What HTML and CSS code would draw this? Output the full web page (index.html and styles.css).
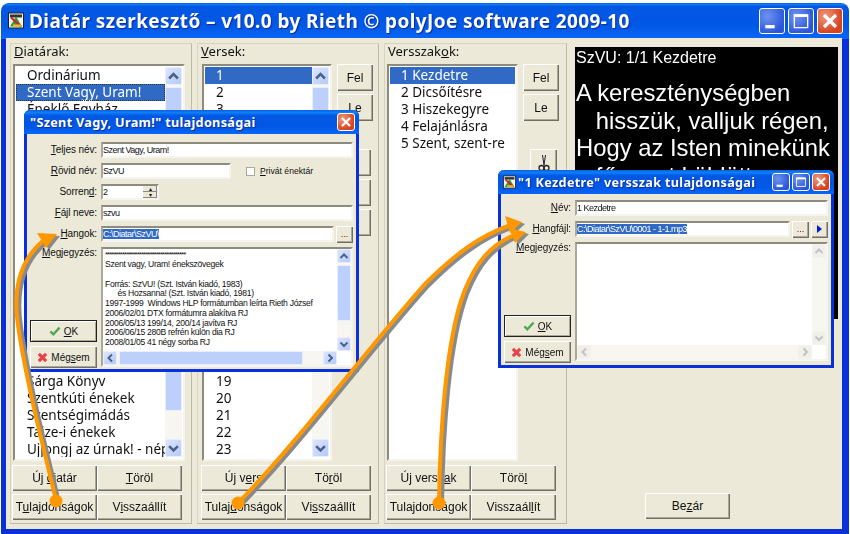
FILE: index.html
```html
<!DOCTYPE html>
<html lang="en">
<head>
    <meta charset="UTF-8">
    <title>Diatár szerkesztő</title>
    <link rel="stylesheet" href="styles.css">
</head>
<body>
<svg class="defs" width="0" height="0">
    <defs>
        <symbol id="up" viewBox="0 0 12 12"><path d="M2.5 8 6 4.5 9.500 8" fill="none" stroke="#4d6185" stroke-width="2"/></symbol>
        <symbol id="down" viewBox="0 0 12 12"><path d="M2.500 4.500 6 8 9.500 4.500" fill="none" stroke="#4d6185" stroke-width="2"/></symbol>
        <symbol id="left" viewBox="0 0 12 12"><path d="M8 2.500 4.500 6 8 9.500" fill="none" stroke="#4d6185" stroke-width="2"/></symbol>
        <symbol id="right" viewBox="0 0 12 12"><path d="M4.500 2.500 8 6 4.500 9.500" fill="none" stroke="#4d6185" stroke-width="2"/></symbol>
        <symbol id="appicon" viewBox="0 0 16 16">
            <rect x="0.500" y="0.500" width="15" height="15" fill="#f4f4ec" stroke="#222"/>
            <rect x="2" y="2" width="12" height="3" fill="#333"/>
            <path d="M2 14 8 4l6 10z" fill="#2f9b3a"/>
            <path d="M3 5l10 9" stroke="#d8202a" stroke-width="2"/>
            <path d="M5 13h8" stroke="#e8c020" stroke-width="2"/>
        </symbol>
        <symbol id="close" viewBox="0 0 18 18"><path d="M4.500 4.500l9 9M13.500 4.500l-9 9" stroke="#fff" stroke-width="2.400"/></symbol>
        <symbol id="min" viewBox="0 0 18 18"><rect x="4" y="12" width="7" height="2.500" fill="#fff"/></symbol>
        <symbol id="max" viewBox="0 0 18 18"><path d="M4 4.500h10v9.500H4z" fill="none" stroke="#fff"/><rect x="4" y="4" width="10" height="2" fill="#fff"/></symbol>
        <symbol id="check" viewBox="0 0 14 12"><path d="M1.500 6.500 5 10l7.500-8" fill="none" stroke="#4fa84f" stroke-width="2.800"/></symbol>
        <symbol id="cross" viewBox="0 0 12 12"><path d="M2 2l8 8M10 2l-8 8" stroke="#e8434a" stroke-width="3.400"/></symbol>
    </defs>
</svg>

<div class="screen">
    <div class="window">
        <div class="titlebar">
            <svg class="appicon"><use href="#appicon"/></svg>
            <span class="title-text">Diatár szerkesztő – v10.0 by Rieth © polyJoe software 2009-10</span>
            <div class="wbtns">
                <span class="wbtn"><svg><use href="#min"/></svg></span>
                <span class="wbtn"><svg><use href="#max"/></svg></span>
                <span class="wbtn wbtn-close"><svg><use href="#close"/></svg></span>
            </div>
        </div>
        <div class="client">
            <!-- diatarak -->
            <div class="panel panel-a">
                <div class="panel-label"><u>D</u>iatárak:</div>
                <div class="panel-mid">
                    <div class="list list-a">
                        <div class="rows">
                            <div class="row">Ordinárium</div>
                            <div class="row row-sel row-focus">Szent Vagy, Uram!</div>
                            <div class="row">Éneklő Egyház</div>
                            <div class="rows-gap"></div>
                            <div class="row">Sárga Könyv</div>
                            <div class="row">Szentkúti énekek</div>
                            <div class="row">Szentségimádás</div>
                            <div class="row">Taize-i énekek</div>
                            <div class="row">Ujjongj az úrnak! - népénekek</div>
                            <div class="row">Zengjük az Urat</div>
                        </div>
                        <div class="sb">
                            <span class="sb-btn"><svg><use href="#up"/></svg></span>
                            <span class="sb-thumb thumb-long"></span>
                            <span class="sb-btn sb-end"><svg><use href="#down"/></svg></span>
                        </div>
                    </div>
                </div>
                <div class="btn-grid">
                    <button class="btn">Új <u>d</u>iatár</button>
                    <button class="btn"><u>T</u>öröl</button>
                    <button class="btn">T<u>u</u>lajdonságok</button>
                    <button class="btn">V<u>i</u>sszaállít</button>
                </div>
            </div>

            <!-- versek -->
            <div class="panel panel-b">
                <div class="panel-label"><u>V</u>ersek:</div>
                <div class="panel-mid">
                    <div class="list list-b">
                        <div class="rows">
                            <div class="row row-sel">1</div>
                            <div class="row">2</div>
                            <div class="row">3</div>
                            <div class="rows-gap"></div>
                            <div class="row">19</div>
                            <div class="row">20</div>
                            <div class="row">21</div>
                            <div class="row">22</div>
                            <div class="row">23</div>
                        </div>
                        <div class="sb">
                            <span class="sb-btn"><svg><use href="#up"/></svg></span>
                            <span class="sb-thumb thumb-short"></span>
                            <span class="sb-btn sb-end"><svg><use href="#down"/></svg></span>
                        </div>
                    </div>
                    <div class="side">
                        <button class="btn btn-side">Fel</button>
                        <button class="btn btn-side">Le</button>
                        <button class="btn btn-icon btn-first"></button>
                        <button class="btn btn-icon"></button>
                        <button class="btn btn-icon"></button>
                    </div>
                </div>
                <div class="btn-grid">
                    <button class="btn">Új v<u>e</u>rs</button>
                    <button class="btn">Tö<u>r</u>öl</button>
                    <button class="btn">Tulaj<u>d</u>onságok</button>
                    <button class="btn">Vi<u>s</u>szaállít</button>
                </div>
            </div>

            <!-- versszakok -->
            <div class="panel panel-c">
                <div class="panel-label">Versszak<u>o</u>k:</div>
                <div class="panel-mid">
                    <div class="list list-c">
                        <div class="rows">
                            <div class="row row-sel">1 Kezdetre</div>
                            <div class="row">2 Dicsőítésre</div>
                            <div class="row">3 Hiszekegyre</div>
                            <div class="row">4 Felajánlásra</div>
                            <div class="row">5 Szent, szent-re</div>
                        </div>
                    </div>
                    <div class="side">
                        <button class="btn btn-side">Fel</button>
                        <button class="btn btn-side">Le</button>
                        <button class="btn btn-icon btn-first">
                            <svg class="scissors" viewBox="0 0 12 20"><path d="M4.500 1l1.500 10M7.500 1 6 11" stroke="#222" fill="none"/><circle cx="3.500" cy="14" r="2.500" fill="none" stroke="#222" stroke-width="1.300"/><circle cx="8.500" cy="14" r="2.500" fill="none" stroke="#222" stroke-width="1.300"/></svg>
                        </button>
                        <button class="btn btn-icon"></button>
                        <button class="btn btn-icon"></button>
                    </div>
                </div>
                <div class="btn-grid">
                    <button class="btn">Új versz<u>a</u>k</button>
                    <button class="btn">Törö<u>l</u></button>
                    <button class="btn">Tulajdonsá<u>g</u>ok</button>
                    <button class="btn">Visszaál<u>l</u>ít</button>
                </div>
            </div>

            <!-- elonezet -->
            <div class="right">
                <div class="preview">
                    <div class="preview-head">SzVU: 1/1 Kezdetre</div>
                    <div class="preview-text">A kereszténységben
   hisszük, valljuk régen,
Hogy az Isten minekünk
   főpapot küldött</div>
                </div>
                <button class="btn btn-close">Be<u>z</u>ár</button>
            </div>
        </div>
    </div>

    <!-- Szent Vagy tulajdonsagai -->
    <div class="dialog dialog-song">
        <div class="dlg-title">
            <span class="dlg-text">"Szent Vagy, Uram!" tulajdonságai</span>
            <span class="wbtn wbtn-close"><svg><use href="#close"/></svg></span>
        </div>
        <div class="form">
            <label class="lbl"><u>T</u>eljes név:</label>
            <div class="field">Szent Vagy, Uram!</div>

            <label class="lbl"><u>R</u>övid név:</label>
            <div class="field-line">
                <div class="field field-short">SzVU</div>
                <span class="checkbox"></span>
                <span class="check-label"><u>P</u>rivát énektár</span>
            </div>

            <label class="lbl">Sorren<u>d</u>:</label>
            <div class="field field-spin">
                <span>2</span>
                <span class="spin"><i>▴</i><i>▾</i></span>
            </div>

            <label class="lbl"><u>F</u>ájl neve:</label>
            <div class="field">szvu</div>

            <label class="lbl"><u>H</u>angok:</label>
            <div class="field-line field-line-tight">
                <div class="field field-grow"><span class="hilite">C:\Diatar\SzVU\</span></div>
                <button class="btn btn-dots">...</button>
            </div>

            <div class="left-cell">
                <label class="lbl lbl-top"><u>M</u>egjegyzés:</label>
                <button class="btn btn-dlg btn-default"><svg class="ico-check"><use href="#check"/></svg><span><u>O</u>K</span></button>
                <button class="btn btn-dlg"><svg class="ico-cross"><use href="#cross"/></svg><span>Még<u>s</u>em</span></button>
            </div>
            <div class="memo memo-song">
                <div class="memo-text"><div class="memo-stars">**************************************</div><pre class="memo-pre">Szent vagy, Uram! énekszövegek

Forrás: SzVU! (Szt. István kiadó, 1983)
      és Hozsanna! (Szt. István kiadó, 1981)
1997-1999  Windows HLP formátumban leírta Rieth József
2006/02/01 DTX formátumra alakítva RJ
2006/05/13 199/14, 200/14 javítva RJ
2006/06/15 280B refrén külön dia RJ
2008/01/05 41 négy sorba RJ</pre></div>
                <div class="sb sb-small">
                    <span class="sb-btn"><svg><use href="#up"/></svg></span>
                    <span class="sb-thumb thumb-memo"></span>
                    <span class="sb-btn sb-end"><svg><use href="#down"/></svg></span>
                </div>
                <div class="sbh">
                    <span class="sb-btn"><svg><use href="#left"/></svg></span>
                    <span class="sbh-thumb"></span>
                    <span class="sb-btn sb-end-h"><svg><use href="#right"/></svg></span>
                </div>
            </div>
        </div>
    </div>

    <!-- versszak tulajdonsagai -->
    <div class="dialog dialog-verse">
        <div class="dlg-title">
            <svg class="appicon-small"><use href="#appicon"/></svg>
            <span class="dlg-text">"1 Kezdetre" versszak tulajdonságai</span>
            <span class="wbtn wbtn-blue"><svg><use href="#min"/></svg></span>
            <span class="wbtn wbtn-blue"><svg><use href="#max"/></svg></span>
            <span class="wbtn wbtn-close"><svg><use href="#close"/></svg></span>
        </div>
        <div class="form form-verse">
            <label class="lbl"><u>N</u>év:</label>
            <div class="field">1 Kezdetre</div>

            <label class="lbl"><u>H</u>angfájl:</label>
            <div class="field-line field-line-tight">
                <div class="field field-grow"><span class="hilite">C:\Diatar\SzVU\0001 - 1-1.mp3</span></div>
                <button class="btn btn-dots">...</button>
                <button class="btn btn-dots"><span class="play"></span></button>
            </div>

            <div class="left-cell">
                <label class="lbl lbl-top"><u>M</u>egjegyzés:</label>
                <button class="btn btn-dlg btn-default"><svg class="ico-check"><use href="#check"/></svg><span><u>O</u>K</span></button>
                <button class="btn btn-dlg"><svg class="ico-cross"><use href="#cross"/></svg><span>Még<u>s</u>em</span></button>
            </div>
            <div class="memo memo-verse">
                <div class="memo-text"></div>
                <div class="sb sb-small sb-off">
                    <span class="sb-btn"><svg><use href="#up"/></svg></span>
                    <span class="sb-btn sb-end"><svg><use href="#down"/></svg></span>
                </div>
                <div class="sbh sbh-off">
                    <span class="sb-btn"><svg><use href="#left"/></svg></span>
                    <span class="sb-btn sb-end-h"><svg><use href="#right"/></svg></span>
                </div>
            </div>
        </div>
    </div>

    <!-- nyilak -->
    <svg class="arrows" viewBox="0 0 850 534">
        <defs>
            <g id="arrow-lines" fill="none" stroke-width="4" stroke-linecap="round">
                <path d="M56 501C46 455 27 390 18 325C12 285 22 258 44 240"/>
                <path d="M238 503C300 440 370 345 425 284C455 254 480 236 508 226"/>
                <path d="M439 503C440 430 446 340 464 292C476 262 490 246 512 236"/>
            </g>
            <g id="arrow-heads">
                <path d="M37 233 57 234 46 248z"/>
                <path d="M505 216 522 222 510 233z"/>
                <path d="M509 228 526 232 515 243z"/>
            </g>
        </defs>
        <g class="arrow-shadow" transform="translate(3 2)">
            <use href="#arrow-lines"/>
            <use href="#arrow-heads"/>
        </g>
        <g class="arrow-main">
            <use href="#arrow-lines"/>
            <use href="#arrow-heads"/>
            <circle cx="56" cy="501" r="6.500"/>
            <circle cx="238" cy="503" r="6.500"/>
            <circle cx="439" cy="503" r="6.500"/>
        </g>
    </svg>
</div>
</body>
</html>
```

FILE: styles.css
```css
* {
    box-sizing: border-box;
}
html, body {
    margin: 0;
    padding: 0;
    background: #fff;
}
.defs {
    position: absolute;
}
.screen {
    position: relative;
    width: 850px;
    height: 534px;
    overflow: hidden;
    filter: blur(0.4px);
    font-family: "Noto Sans", sans-serif;
    color: #111;
}
u {
    text-underline-offset: 1px;
}

/* main window */
.window {
    width: 848px;
    height: 531px;
    margin: 3px 0 0 1px;
    border-radius: 8px 8px 0 0;
    background: linear-gradient(#0a5be0, #0d7bf8 4%, #0358e2 9%, #0157e6 60%, #0a66f6 100%);
    background-size: 100% 36px;
    background-repeat: no-repeat;
    background-color: #0831d9;
}
.titlebar {
    display: flex;
    align-items: center;
    height: 35px;
    padding: 0 6px 0 7px;
}
.appicon {
    width: 16px;
    height: 17px;
    margin-right: 5px;
}
.title-text {
    font-size: 19px;
    font-weight: 700;
    letter-spacing: 0.4px;
    color: #fff;
    white-space: nowrap;
    text-shadow: 1px 1px 1px #0b2c9c;
}
.wbtns {
    display: flex;
    gap: 3px;
    margin-left: auto;
}
.wbtn {
    display: block;
    flex: none;
    width: 18px;
    height: 18px;
    border: 1px solid #fff;
    border-radius: 3px;
    background: radial-gradient(circle at 30% 30%, #6f93f0, #2a56d8 75%);
}
.wbtn svg {
    display: block;
    width: 100%;
    height: 100%;
}
.wbtns .wbtn {
    width: 26px;
    height: 26px;
}
.wbtn-close {
    background: radial-gradient(circle at 30% 30%, #ee9a7c, #d8431f 70%);
}
.client {
    display: flex;
    gap: 5px;
    width: 836px;
    height: 491px;
    margin-left: 5px;
    padding: 5px 0 0 4px;
    background: #ece9d8;
}

/* three list panels */
.panel {
    display: flex;
    flex-direction: column;
    flex: none;
    width: 182px;
    height: 481px;
    border: 1px solid #d6d3c3;
    border-right-color: #bdbaa8;
    border-bottom-color: #bdbaa8;
}
.panel-c {
    width: 183px;
}
.panel-label {
    height: 20px;
    padding-left: 3px;
    font-size: 13px;
    line-height: 15px;
}
.panel-mid {
    display: flex;
    height: 397px;
}
.panel-a .panel-mid {
    padding-left: 2px;
}
.panel-b .panel-mid {
    padding-left: 4px;
}
.panel-c .panel-mid {
    padding-left: 2px;
}
.list {
    display: flex;
    flex: none;
    height: 397px;
    padding: 1px 1px 2px 1px;
    border-top: 2px solid #8d8b7e;
    border-left: 2px solid #8d8b7e;
    border-right: 2px solid #f5f4ee;
    border-bottom: 2px solid #f5f4ee;
    background: #fff;
    overflow: hidden;
}
.list-a {
    width: 172px;
}
.list-b {
    width: 130px;
}
.list-c {
    width: 131px;
}
.rows {
    flex: 1;
    min-width: 0;
    overflow: hidden;
}
.row {
    height: 17px;
    padding-left: 11px;
    font-size: 13.5px;
    line-height: 17px;
    white-space: nowrap;
    overflow: hidden;
}
.rows-gap {
    height: 255px;
}
.row-sel {
    background: #316ac5;
    color: #fff;
}
.row-focus {
    outline: 1px dotted #333;
    outline-offset: -1px;
}

/* scrollbars */
.sb {
    display: flex;
    flex-direction: column;
    flex: none;
    width: 17px;
    background: #f7f6f1;
}
.sb-btn {
    display: block;
    flex: none;
    width: 17px;
    height: 18px;
    border: 1px solid #e8eefc;
    border-radius: 2px;
    background: linear-gradient(135deg, #dbe6fd, #b4caf9);
}
.sb-btn svg {
    display: block;
    width: 100%;
    height: 100%;
}
.sb-thumb {
    display: block;
    margin-top: 2px;
    border: 1px solid #e8eefc;
    border-radius: 2px;
    background: #bcd0fb;
}
.thumb-long {
    height: 324px;
}
.thumb-short {
    height: 24px;
}
.thumb-memo {
    height: 56px;
}
.sb-end {
    margin-top: auto;
}
.sb-small,
.sb-small .sb-btn {
    width: 14px;
}
.sb-small .sb-btn {
    height: 14px;
}
.sbh {
    display: flex;
    grid-column: 1 / 3;
    height: 14px;
    margin-right: 14px;
    background: #f7f6f1;
}
.sbh .sb-btn {
    width: 14px;
    height: 14px;
}
.sbh-thumb {
    display: block;
    width: 184px;
    height: 14px;
    margin-left: 2px;
    border: 1px solid #e8eefc;
    border-radius: 2px;
    background: #bcd0fb;
}
.sb-end-h {
    margin-left: auto;
}
.sb-off .sb-btn,
.sbh-off .sb-btn {
    border-color: #f4f3ee;
    background: #f0efe8;
}
.sb-off svg,
.sbh-off svg {
    opacity: 0.3;
}

/* buttons */
.btn {
    display: block;
    margin: 0;
    padding: 0;
    border: none;
    border-radius: 0;
    background: #ece9d8;
    box-shadow: inset 1px 1px 0 #fff, inset -1px -1px 0 #716f64, inset -2px -2px 0 #aca899;
    font-family: "Liberation Sans", sans-serif;
    font-size: 12px;
    color: #111;
    white-space: nowrap;
}
.btn-grid {
    display: grid;
    grid-template-columns: 85px 85px;
    grid-template-rows: 26px 26px;
    row-gap: 3px;
    margin-top: 4px;
    margin-left: 1px;
}
.panel-b .btn-grid {
    margin-left: 3px;
}
.side {
    display: flex;
    flex-direction: column;
    width: 36px;
    margin-left: 5px;
}
.btn-side {
    flex: none;
    width: 36px;
    height: 27px;
    margin-bottom: 3px;
}
.btn-icon {
    flex: none;
    width: 27px;
    height: 27px;
    margin: 0 0 3px 7px;
}
.btn-first {
    margin-top: 25px;
}
.scissors {
    display: block;
    width: 12px;
    height: 20px;
    margin: 3px auto 0;
}

/* right side */
.right {
    display: flex;
    flex-direction: column;
    flex: 1;
    height: 481px;
    padding: 4px 4px 5px 3px;
}
.preview {
    height: 272px;
    background: #000;
    color: #fff;
    font-family: "Liberation Sans", sans-serif;
    overflow: hidden;
}
.preview-head {
    height: 32px;
    padding-left: 1px;
    font-size: 16px;
    line-height: 21px;
}
.preview-text {
    padding-left: 1px;
    font-size: 23.800px;
    line-height: 27.5px;
    white-space: pre;
}
.btn-close {
    flex: none;
    width: 85px;
    height: 26px;
    margin-top: auto;
    margin-left: 70px;
}

/* dialogs */
.dialog {
    position: absolute;
    width: 335px;
    border: 3px solid #0831d9;
    border-top: none;
    border-radius: 6px 6px 0 0;
    background: #ece9d8;
}
.dialog-song {
    left: 24px;
    top: 110px;
    height: 262px;
}
.dialog-verse {
    left: 498px;
    top: 170px;
    width: 336px;
    height: 198px;
}
.dlg-title {
    display: flex;
    align-items: center;
    gap: 2px;
    height: 24px;
    margin: 0 -3px;
    padding: 0 4px 0 6px;
    border-radius: 6px 6px 0 0;
    background: linear-gradient(#0a5be0, #0f80fa 10%, #0358e2 24%, #0157e6 70%, #0a66f6 100%);
}
.dlg-text {
    flex: 1;
    font-size: 12.700px;
    font-weight: 700;
    letter-spacing: 0.3px;
    color: #fff;
    white-space: nowrap;
    text-shadow: 1px 1px 1px #0b2c9c;
}
.appicon-small {
    flex: none;
    width: 13px;
    height: 14px;
    margin: 0 0 0 -1px;
}
.form {
    display: grid;
    grid-template-columns: 70px 1fr;
    grid-auto-rows: 16px;
    gap: 5px 4px;
    padding: 8px 3px 0 0;
}
.form-verse {
    padding-top: 6px;
}
.lbl {
    display: block;
    font-family: "Liberation Sans", sans-serif;
    font-size: 10px;
    line-height: 16px;
    text-align: right;
    letter-spacing: -0.1px;
    white-space: nowrap;
}
.lbl-top {
    width: 100%;
    line-height: 12px;
}
.field {
    height: 16px;
    border-top: 2px solid #8d8b7e;
    border-left: 2px solid #aca899;
    border-right: 2px solid #f5f4ee;
    border-bottom: 2px solid #f5f4ee;
    background: #fff;
    font-family: "Liberation Sans", sans-serif;
    font-size: 9px;
    line-height: 12px;
    letter-spacing: -0.5px;
    white-space: nowrap;
    overflow: hidden;
}
.field-line {
    display: flex;
    align-items: center;
    height: 16px;
}
.field-line-tight {
    gap: 2px;
}
.field-short {
    flex: none;
    width: 130px;
}
.field-grow {
    flex: 1;
    min-width: 0;
}
.field-spin {
    display: flex;
    justify-content: space-between;
    width: 58px;
}
.spin {
    display: flex;
    flex-direction: column;
    width: 14px;
}
.spin i {
    display: block;
    height: 6px;
    background: #ece9d8;
    box-shadow: inset -1px -1px 0 #888;
    font-size: 6px;
    font-style: normal;
    line-height: 6px;
    text-align: center;
}
.checkbox {
    flex: none;
    width: 9px;
    height: 9px;
    margin-left: 15px;
    border: 1px solid #aca899;
    background: #fff;
}
.check-label {
    margin-left: 5px;
    font-family: "Liberation Sans", sans-serif;
    font-size: 8.600px;
    white-space: nowrap;
}
.hilite {
    background: #316ac5;
    color: #fff;
}
.btn-dots {
    flex: none;
    width: 17px;
    height: 17px;
    font-size: 9px;
    line-height: 12px;
    color: #800;
}
.play {
    display: block;
    width: 0;
    height: 0;
    margin: 0 auto;
    border-left: 5px solid #0020d0;
    border-top: 4px solid transparent;
    border-bottom: 4px solid transparent;
}
.left-cell {
    display: flex;
    flex-direction: column;
    align-items: flex-end;
    height: 121px;
}
.btn-dlg {
    display: flex;
    align-items: center;
    justify-content: center;
    gap: 3px;
    flex: none;
    width: 67px;
    height: 22px;
    font-size: 10px;
}
.btn-default {
    margin-top: auto;
    margin-bottom: 4px;
    box-shadow: 0 0 0 1px #222 inset, inset 2px 2px 0 #fff, inset -2px -2px 0 #aca899;
}
.ico-check {
    width: 12px;
    height: 10px;
}
.ico-cross {
    width: 11px;
    height: 11px;
}
.memo {
    display: grid;
    grid-template-columns: 1fr 14px;
    grid-template-rows: 1fr 14px;
    border-top: 2px solid #8d8b7e;
    border-left: 2px solid #aca899;
    border-right: 2px solid #f5f4ee;
    border-bottom: 2px solid #f5f4ee;
    background: #fff;
    overflow: hidden;
}
.memo-song {
    height: 120px;
}
.memo-verse {
    height: 119px;
}
.memo-text {
    padding: 1px 0 0 2px;
    overflow: hidden;
}
.memo-stars {
    height: 10px;
    font-family: "Liberation Sans", sans-serif;
    font-size: 8px;
    line-height: 9px;
    letter-spacing: -1px;
    white-space: nowrap;
}
.memo-pre {
    margin: 0;
    font-family: "Liberation Sans", sans-serif;
    font-size: 8.600px;
    line-height: 9.750px;
    letter-spacing: -0.3px;
}

/* arrows over everything */
.arrows {
    position: absolute;
    left: 0;
    top: 0;
    width: 850px;
    height: 534px;
    pointer-events: none;
}
.arrow-shadow {
    stroke: #8a8a8a;
    fill: #8a8a8a;
}
.arrow-main {
    stroke: #ff9800;
    fill: #ff9800;
}
.arrow-main circle {
    stroke: none;
}
#arrow-heads {
    stroke: none;
}
```
